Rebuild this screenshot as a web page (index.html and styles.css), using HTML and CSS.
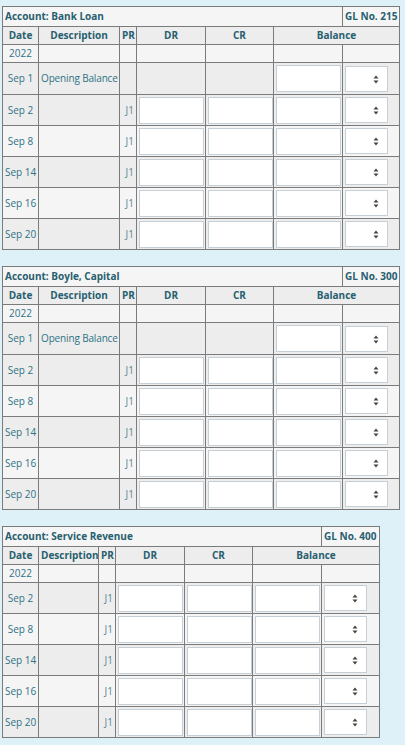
FILE: index.html
```html
<!DOCTYPE html>
<html>
<head>
<meta charset="utf-8">
<link rel="stylesheet" href="styles.css">
</head>
<body>
<div class="page">

<table class="ledger wide">
  <colgroup><col class="c-date"><col class="c-desc-w"><col class="c-pr"><col class="c-dr"><col class="c-cr"><col class="c-bal"><col class="c-sel"></colgroup>
  <tr class="acct"><td colspan="6">Account: Bank Loan</td><td class="gl">GL No. 215</td></tr>
  <tr class="head"><th>Date</th><th>Description</th><th>PR</th><th>DR</th><th>CR</th><th colspan="2">Balance</th></tr>
  <tr class="light yr"><td class="date">2022</td><td></td><td></td><td></td><td></td><td></td><td></td></tr>
  <tr class="dark in first"><td class="date">Sep 1</td><td class="desc">Opening Balance</td><td></td><td></td><td></td><td><input class="amt" type="text"></td><td><div class="sel"><select></select><svg class="arr" width="6" height="9" viewBox="0 0 6 9"><path d="M3 0.5 L5.5 3.5 H0.5 Z M3 8.5 L5.5 5.5 H0.5 Z" fill="#444"/></svg></div></td></tr>
  <tr class="dark in"><td class="date">Sep 2</td><td></td><td class="pr">J1</td><td><input class="amt" type="text"></td><td><input class="amt" type="text"></td><td><input class="amt" type="text"></td><td><div class="sel"><select></select><svg class="arr" width="6" height="9" viewBox="0 0 6 9"><path d="M3 0.5 L5.5 3.5 H0.5 Z M3 8.5 L5.5 5.5 H0.5 Z" fill="#444"/></svg></div></td></tr>
  <tr class="light in"><td class="date">Sep 8</td><td></td><td class="pr">J1</td><td><input class="amt" type="text"></td><td><input class="amt" type="text"></td><td><input class="amt" type="text"></td><td><div class="sel"><select></select><svg class="arr" width="6" height="9" viewBox="0 0 6 9"><path d="M3 0.5 L5.5 3.5 H0.5 Z M3 8.5 L5.5 5.5 H0.5 Z" fill="#444"/></svg></div></td></tr>
  <tr class="dark in"><td class="date">Sep 14</td><td></td><td class="pr">J1</td><td><input class="amt" type="text"></td><td><input class="amt" type="text"></td><td><input class="amt" type="text"></td><td><div class="sel"><select></select><svg class="arr" width="6" height="9" viewBox="0 0 6 9"><path d="M3 0.5 L5.5 3.5 H0.5 Z M3 8.5 L5.5 5.5 H0.5 Z" fill="#444"/></svg></div></td></tr>
  <tr class="light in"><td class="date">Sep 16</td><td></td><td class="pr">J1</td><td><input class="amt" type="text"></td><td><input class="amt" type="text"></td><td><input class="amt" type="text"></td><td><div class="sel"><select></select><svg class="arr" width="6" height="9" viewBox="0 0 6 9"><path d="M3 0.5 L5.5 3.5 H0.5 Z M3 8.5 L5.5 5.5 H0.5 Z" fill="#444"/></svg></div></td></tr>
  <tr class="dark in"><td class="date">Sep 20</td><td></td><td class="pr">J1</td><td><input class="amt" type="text"></td><td><input class="amt" type="text"></td><td><input class="amt" type="text"></td><td><div class="sel"><select></select><svg class="arr" width="6" height="9" viewBox="0 0 6 9"><path d="M3 0.5 L5.5 3.5 H0.5 Z M3 8.5 L5.5 5.5 H0.5 Z" fill="#444"/></svg></div></td></tr>
</table>

<table class="ledger wide">
  <colgroup><col class="c-date"><col class="c-desc-w"><col class="c-pr"><col class="c-dr"><col class="c-cr"><col class="c-bal"><col class="c-sel"></colgroup>
  <tr class="acct"><td colspan="6">Account: Boyle, Capital</td><td class="gl">GL No. 300</td></tr>
  <tr class="head"><th>Date</th><th>Description</th><th>PR</th><th>DR</th><th>CR</th><th colspan="2">Balance</th></tr>
  <tr class="light yr"><td class="date">2022</td><td></td><td></td><td></td><td></td><td></td><td></td></tr>
  <tr class="dark in first"><td class="date">Sep 1</td><td class="desc">Opening Balance</td><td></td><td></td><td></td><td><input class="amt" type="text"></td><td><div class="sel"><select></select><svg class="arr" width="6" height="9" viewBox="0 0 6 9"><path d="M3 0.5 L5.5 3.5 H0.5 Z M3 8.5 L5.5 5.5 H0.5 Z" fill="#444"/></svg></div></td></tr>
  <tr class="dark in"><td class="date">Sep 2</td><td></td><td class="pr">J1</td><td><input class="amt" type="text"></td><td><input class="amt" type="text"></td><td><input class="amt" type="text"></td><td><div class="sel"><select></select><svg class="arr" width="6" height="9" viewBox="0 0 6 9"><path d="M3 0.5 L5.5 3.5 H0.5 Z M3 8.5 L5.5 5.5 H0.5 Z" fill="#444"/></svg></div></td></tr>
  <tr class="light in"><td class="date">Sep 8</td><td></td><td class="pr">J1</td><td><input class="amt" type="text"></td><td><input class="amt" type="text"></td><td><input class="amt" type="text"></td><td><div class="sel"><select></select><svg class="arr" width="6" height="9" viewBox="0 0 6 9"><path d="M3 0.5 L5.5 3.5 H0.5 Z M3 8.5 L5.5 5.5 H0.5 Z" fill="#444"/></svg></div></td></tr>
  <tr class="dark in"><td class="date">Sep 14</td><td></td><td class="pr">J1</td><td><input class="amt" type="text"></td><td><input class="amt" type="text"></td><td><input class="amt" type="text"></td><td><div class="sel"><select></select><svg class="arr" width="6" height="9" viewBox="0 0 6 9"><path d="M3 0.5 L5.5 3.5 H0.5 Z M3 8.5 L5.5 5.5 H0.5 Z" fill="#444"/></svg></div></td></tr>
  <tr class="light in"><td class="date">Sep 16</td><td></td><td class="pr">J1</td><td><input class="amt" type="text"></td><td><input class="amt" type="text"></td><td><input class="amt" type="text"></td><td><div class="sel"><select></select><svg class="arr" width="6" height="9" viewBox="0 0 6 9"><path d="M3 0.5 L5.5 3.5 H0.5 Z M3 8.5 L5.5 5.5 H0.5 Z" fill="#444"/></svg></div></td></tr>
  <tr class="dark in"><td class="date">Sep 20</td><td></td><td class="pr">J1</td><td><input class="amt" type="text"></td><td><input class="amt" type="text"></td><td><input class="amt" type="text"></td><td><div class="sel"><select></select><svg class="arr" width="6" height="9" viewBox="0 0 6 9"><path d="M3 0.5 L5.5 3.5 H0.5 Z M3 8.5 L5.5 5.5 H0.5 Z" fill="#444"/></svg></div></td></tr>
</table>

<table class="ledger narrow">
  <colgroup><col class="c-date"><col class="c-desc-n"><col class="c-pr"><col class="c-dr"><col class="c-cr"><col class="c-bal"><col class="c-sel-n"></colgroup>
  <tr class="acct"><td colspan="6">Account: Service Revenue</td><td class="gl">GL No. 400</td></tr>
  <tr class="head"><th>Date</th><th>Description</th><th>PR</th><th>DR</th><th>CR</th><th colspan="2">Balance</th></tr>
  <tr class="light yr"><td class="date">2022</td><td></td><td></td><td></td><td></td><td></td><td></td></tr>
  <tr class="dark in"><td class="date">Sep 2</td><td></td><td class="pr">J1</td><td><input class="amt" type="text"></td><td><input class="amt" type="text"></td><td><input class="amt" type="text"></td><td><div class="sel"><select></select><svg class="arr" width="6" height="9" viewBox="0 0 6 9"><path d="M3 0.5 L5.5 3.5 H0.5 Z M3 8.5 L5.5 5.5 H0.5 Z" fill="#444"/></svg></div></td></tr>
  <tr class="light in"><td class="date">Sep 8</td><td></td><td class="pr">J1</td><td><input class="amt" type="text"></td><td><input class="amt" type="text"></td><td><input class="amt" type="text"></td><td><div class="sel"><select></select><svg class="arr" width="6" height="9" viewBox="0 0 6 9"><path d="M3 0.5 L5.5 3.5 H0.5 Z M3 8.5 L5.5 5.5 H0.5 Z" fill="#444"/></svg></div></td></tr>
  <tr class="dark in"><td class="date">Sep 14</td><td></td><td class="pr">J1</td><td><input class="amt" type="text"></td><td><input class="amt" type="text"></td><td><input class="amt" type="text"></td><td><div class="sel"><select></select><svg class="arr" width="6" height="9" viewBox="0 0 6 9"><path d="M3 0.5 L5.5 3.5 H0.5 Z M3 8.5 L5.5 5.5 H0.5 Z" fill="#444"/></svg></div></td></tr>
  <tr class="light in"><td class="date">Sep 16</td><td></td><td class="pr">J1</td><td><input class="amt" type="text"></td><td><input class="amt" type="text"></td><td><input class="amt" type="text"></td><td><div class="sel"><select></select><svg class="arr" width="6" height="9" viewBox="0 0 6 9"><path d="M3 0.5 L5.5 3.5 H0.5 Z M3 8.5 L5.5 5.5 H0.5 Z" fill="#444"/></svg></div></td></tr>
  <tr class="dark in"><td class="date">Sep 20</td><td></td><td class="pr">J1</td><td><input class="amt" type="text"></td><td><input class="amt" type="text"></td><td><input class="amt" type="text"></td><td><div class="sel"><select></select><svg class="arr" width="6" height="9" viewBox="0 0 6 9"><path d="M3 0.5 L5.5 3.5 H0.5 Z M3 8.5 L5.5 5.5 H0.5 Z" fill="#444"/></svg></div></td></tr>
</table>

</div>
</body>
</html>
```

FILE: styles.css
```css
html, body {
  margin: 0;
  padding: 0;
  background: #dff1f8;
}
.page {
  padding: 6px 2px 0 2px;
  font-family: "Open Sans", "Liberation Sans", sans-serif;
  font-size: 10px;
  color: #2f7285;
}
.ledger {
  border-collapse: collapse;
  table-layout: fixed;
  margin-bottom: 16px;
}
.ledger.wide { width: 397px; }
.ledger.narrow { width: 378px; }
.c-date { width: 36px; }
.c-desc-w { width: 81px; }
.c-desc-n { width: 60px; }
.c-pr { width: 17px; }
.c-dr { width: 69px; }
.c-cr { width: 68px; }
.c-bal { width: 69px; }
.c-sel { width: 57px; }
.c-sel-n { width: 58px; }
.ledger td, .ledger th {
  border: 1px solid #7b7b7b;
  padding: 0 2px;
  line-height: 13px;
  white-space: nowrap;
  overflow: hidden;
}
.acct td {
  background: #f5f5f5;
  font-weight: 700;
  color: #27606f;
  height: 19px;
  padding: 0 2px;
  text-align: left;
}
.head th {
  background: #ededed;
  font-weight: 700;
  color: #27606f;
  height: 17px;
  text-align: center;
}
.yr td { height: 17px; }
.light td { background: #f5f5f5; }
.dark td { background: #ededed; }
.in td { height: 30px; padding: 0 2px; }
.in.first td { height: 31px; }
.date { text-align: center; }
.desc { text-align: left; padding-left: 2px; letter-spacing: -0.15px; }
.pr { text-align: right; color: #5a8996; }
.amt {
  display: block;
  box-sizing: border-box;
  width: 65px;
  height: 27px;
  margin: 0;
  border: 1px solid #c6ced6;
  background: #fff;
  padding: 0 3px;
  font: inherit;
}
.sel {
  position: relative;
  width: 43px;
  height: 26px;
}
.sel select {
  -webkit-appearance: none;
  appearance: none;
  display: block;
  box-sizing: border-box;
  width: 43px;
  height: 26px;
  margin: 0;
  border: 1px solid #c6ced6;
  border-radius: 0;
  background: #fff;
}
.arr {
  position: absolute;
  right: 9px;
  top: 9px;
  pointer-events: none;
}
```
